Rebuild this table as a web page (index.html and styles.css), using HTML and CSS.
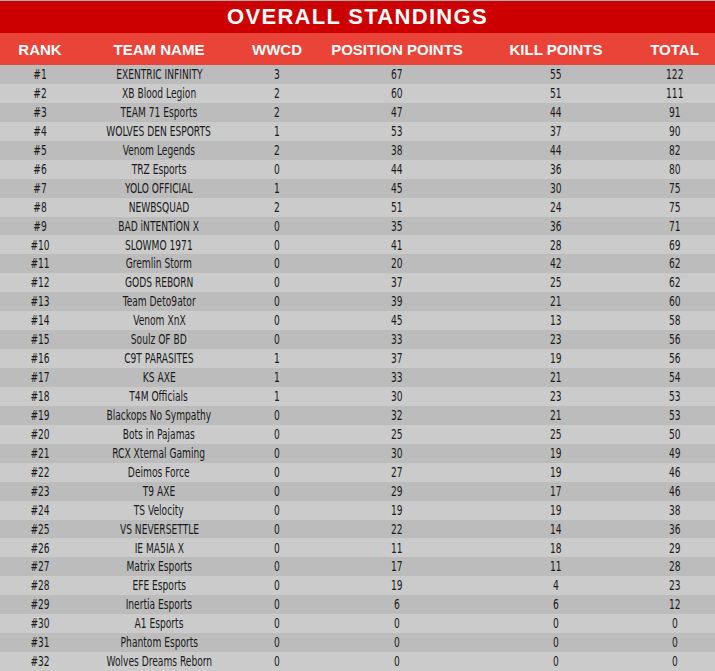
FILE: index.html
```html
<!DOCTYPE html>
<html>
<head>
<meta charset="utf-8">
<link rel="stylesheet" href="styles.css">
</head>
<body>
<div class="board">
  <div class="title">OVERALL STANDINGS</div>
  <div class="row head">
    <div>RANK</div><div>TEAM NAME</div><div>WWCD</div><div>POSITION POINTS</div><div>KILL POINTS</div><div>TOTAL</div>
  </div>
  <div class="row"><span>#1</span><span>EXENTRIC INFINITY</span><span>3</span><span>67</span><span>55</span><span>122</span></div>
  <div class="row"><span>#2</span><span>XB Blood Legion</span><span>2</span><span>60</span><span>51</span><span>111</span></div>
  <div class="row"><span>#3</span><span>TEAM 71 Esports</span><span>2</span><span>47</span><span>44</span><span>91</span></div>
  <div class="row"><span>#4</span><span>WOLVES DEN ESPORTS</span><span>1</span><span>53</span><span>37</span><span>90</span></div>
  <div class="row"><span>#5</span><span>Venom Legends</span><span>2</span><span>38</span><span>44</span><span>82</span></div>
  <div class="row"><span>#6</span><span>TRZ Esports</span><span>0</span><span>44</span><span>36</span><span>80</span></div>
  <div class="row"><span>#7</span><span>YOLO OFFICIAL</span><span>1</span><span>45</span><span>30</span><span>75</span></div>
  <div class="row"><span>#8</span><span>NEWBSQUAD</span><span>2</span><span>51</span><span>24</span><span>75</span></div>
  <div class="row"><span>#9</span><span>BAD iNTENTiON X</span><span>0</span><span>35</span><span>36</span><span>71</span></div>
  <div class="row"><span>#10</span><span>SLOWMO 1971</span><span>0</span><span>41</span><span>28</span><span>69</span></div>
  <div class="row"><span>#11</span><span>Gremlin Storm</span><span>0</span><span>20</span><span>42</span><span>62</span></div>
  <div class="row"><span>#12</span><span>GODS REBORN</span><span>0</span><span>37</span><span>25</span><span>62</span></div>
  <div class="row"><span>#13</span><span>Team Deto9ator</span><span>0</span><span>39</span><span>21</span><span>60</span></div>
  <div class="row"><span>#14</span><span>Venom XnX</span><span>0</span><span>45</span><span>13</span><span>58</span></div>
  <div class="row"><span>#15</span><span>Soulz OF BD</span><span>0</span><span>33</span><span>23</span><span>56</span></div>
  <div class="row"><span>#16</span><span>C9T PARASITES</span><span>1</span><span>37</span><span>19</span><span>56</span></div>
  <div class="row"><span>#17</span><span>KS AXE</span><span>1</span><span>33</span><span>21</span><span>54</span></div>
  <div class="row"><span>#18</span><span>T4M Officials</span><span>1</span><span>30</span><span>23</span><span>53</span></div>
  <div class="row"><span>#19</span><span>Blackops No Sympathy</span><span>0</span><span>32</span><span>21</span><span>53</span></div>
  <div class="row"><span>#20</span><span>Bots in Pajamas</span><span>0</span><span>25</span><span>25</span><span>50</span></div>
  <div class="row"><span>#21</span><span>RCX Xternal Gaming</span><span>0</span><span>30</span><span>19</span><span>49</span></div>
  <div class="row"><span>#22</span><span>Deimos Force</span><span>0</span><span>27</span><span>19</span><span>46</span></div>
  <div class="row"><span>#23</span><span>T9 AXE</span><span>0</span><span>29</span><span>17</span><span>46</span></div>
  <div class="row"><span>#24</span><span>TS Velocity</span><span>0</span><span>19</span><span>19</span><span>38</span></div>
  <div class="row"><span>#25</span><span>VS NEVERSETTLE</span><span>0</span><span>22</span><span>14</span><span>36</span></div>
  <div class="row"><span>#26</span><span>IE MA5IA X</span><span>0</span><span>11</span><span>18</span><span>29</span></div>
  <div class="row"><span>#27</span><span>Matrix Esports</span><span>0</span><span>17</span><span>11</span><span>28</span></div>
  <div class="row"><span>#28</span><span>EFE Esports</span><span>0</span><span>19</span><span>4</span><span>23</span></div>
  <div class="row"><span>#29</span><span>Inertia Esports</span><span>0</span><span>6</span><span>6</span><span>12</span></div>
  <div class="row"><span>#30</span><span>A1 Esports</span><span>0</span><span>0</span><span>0</span><span>0</span></div>
  <div class="row"><span>#31</span><span>Phantom Esports</span><span>0</span><span>0</span><span>0</span><span>0</span></div>
  <div class="row"><span>#32</span><span>Wolves Dreams Reborn</span><span>0</span><span>0</span><span>0</span><span>0</span></div>
</div>
</body>
</html>
```
FILE: styles.css
```css
html, body {
  margin: 0;
  padding: 0;
  background: #ffffff;
}
.board {
  width: 715px;
  border-top: 1px solid #a9a9a9;
  font-family: "Liberation Sans", Arial, sans-serif;
}
.title {
  height: 32px;
  background: #cc0000;
  color: #ffffff;
  font-weight: bold;
  font-size: 22px;
  letter-spacing: 1.3px;
  display: flex;
  align-items: center;
  justify-content: center;
}
.row {
  display: grid;
  grid-template-columns: 80px 158px 78px 162px 156px 81px;
  height: 18.94px;
  align-items: center;
  justify-items: center;
  background: #bcbcbc;
}
.row:nth-child(even) {
  background: #cbcbcb;
}
.row.head {
  height: 32px;
  background: #ea4439;
  color: #ffffff;
  font-weight: bold;
  font-size: 15px;
}
.row span {
  display: inline-block;
  font-family: "DejaVu Sans Condensed", "DejaVu Sans", sans-serif;
  font-stretch: condensed;
  font-size: 13.7px;
  color: #1a1a1a;
  transform: scaleX(0.74);
  white-space: nowrap;
  line-height: 1;
  padding-top: 1px;
}
```
